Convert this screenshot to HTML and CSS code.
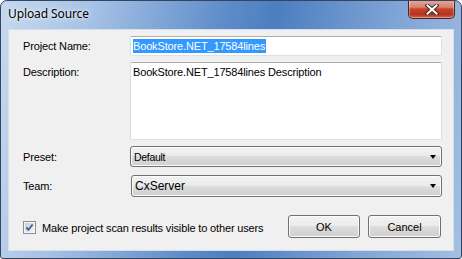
FILE: index.html
```html
<!DOCTYPE html>
<html lang="en">
<head>
  <meta charset="UTF-8">
  <title>Upload Source</title>
  <link rel="stylesheet" href="styles.css">
</head>
<body>
  <div class="window">
    <div class="titlebar">
      <span class="title">Upload Source</span>
      <div class="close-btn">
        <svg width="14" height="11" viewBox="0 0 14 11">
          <path d="M2.5 1.5 L11.5 9.5 M11.5 1.5 L2.5 9.5" stroke="#3a2a2a" stroke-width="4" stroke-linecap="square"/>
          <path d="M2.5 1.5 L11.5 9.5 M11.5 1.5 L2.5 9.5" stroke="#ffffff" stroke-width="2" stroke-linecap="square"/>
        </svg>
      </div>
    </div>

    <div class="client">
      <div class="row row-name">
        <label class="field-label">Project Name:</label>
        <div class="textbox"><span class="selected">BookStore.NET_17584lines</span></div>
      </div>

      <div class="row row-desc">
        <label class="field-label">Description:</label>
        <div class="textbox textarea">BookStore.NET_17584lines Description</div>
      </div>

      <div class="row row-preset">
        <label class="field-label">Preset:</label>
        <div class="combo combo-small">
          <span class="combo-text">Default</span>
          <span class="combo-arrow"></span>
        </div>
      </div>

      <div class="row row-team">
        <label class="field-label">Team:</label>
        <div class="combo combo-large">
          <span class="combo-text">CxServer</span>
          <span class="combo-arrow"></span>
        </div>
      </div>

      <div class="row row-bottom">
        <div class="check">
          <svg width="13" height="13" viewBox="0 0 13 13">
            <defs>
              <linearGradient id="cbg" x1="0" y1="0" x2="1" y2="1">
                <stop offset="0" stop-color="#c9ccd1"/>
                <stop offset="1" stop-color="#f4f4f4"/>
              </linearGradient>
            </defs>
            <rect x="0.5" y="0.5" width="12" height="12" fill="#f6f6f6" stroke="#8e8f8f"/>
            <rect x="2" y="2" width="9" height="9" fill="url(#cbg)"/>
            <path d="M3.3 6.4 L5.4 8.8 L9.6 3.4" fill="none" stroke="#3c5a9e" stroke-width="1.7"/>
          </svg>
          <span>Make project scan results visible to other users</span>
        </div>
        <div class="buttons">
          <button class="btn btn-ok">OK</button>
          <button class="btn btn-cancel">Cancel</button>
        </div>
      </div>
    </div>
  </div>
</body>
</html>
```

FILE: styles.css
```css
body {
  margin: 0;
  background-color: #ffffff;
  font-family: 'Liberation Sans', Arial, sans-serif;
  font-size: 11px;
  letter-spacing: -0.15px;
  color: #000000;
}
.window {
  width: 462px;
  height: 259px;
  box-sizing: border-box;
  border: 1px solid #34465f;
  border-radius: 7px 7px 3px 3px;
  background: linear-gradient(100deg, #c6d8ee 0%, #a7c2e6 18%, #5d8cc8 45%, #4c7ec0 55%, #7ea3d5 78%, #a3bfe3 100%);
  display: flex;
  flex-direction: column;
  overflow: hidden;
}
.titlebar {
  height: 28px;
  display: flex;
  align-items: flex-start;
  padding-left: 7px;
  padding-right: 6px;
}
.title {
  font-family: 'Noto Sans', 'Open Sans', sans-serif;
  font-size: 12px;
  letter-spacing: -0.1px;
  color: #000000;
  margin-top: 4px;
  text-shadow: 0 0 6px rgba(255, 255, 255, 0.9), 0 0 3px rgba(255, 255, 255, 0.7);
}
.close-btn {
  margin-left: auto;
  margin-top: -1px;
  width: 47px;
  height: 19px;
  box-sizing: border-box;
  border: 1px solid #4a2520;
  border-top: none;
  border-radius: 0 0 5px 5px;
  background: linear-gradient(#e9a99c 0%, #d7826f 40%, #c6442c 50%, #b8321c 80%, #d2674f 100%);
  box-shadow: inset 0 0 0 1px rgba(255, 255, 255, 0.35);
  display: flex;
  align-items: center;
  justify-content: center;
}
.client {
  margin: 0 7px 7px 7px;
  flex: 1;
  box-sizing: border-box;
  border: 1px solid #d5dfec;
  background-color: #f0f0f0;
  padding: 6px 11px 0 14px;
  display: flex;
  flex-direction: column;
}
.row {
  display: flex;
  align-items: center;
}
.field-label {
  width: 107px;
  flex-shrink: 0;
}
.textbox {
  flex: 1;
  height: 20px;
  box-sizing: border-box;
  background-color: #ffffff;
  border: 1px solid #dbdfe6;
  border-top-color: #abadb3;
  border-radius: 2px;
  padding: 2px 2px 0 2px;
}
.selected {
  display: inline-block;
  background-color: #3399ff;
  color: #ffffff;
  line-height: 14px;
  padding-right: 1px;
}
.row-desc {
  margin-top: 6px;
  align-items: flex-start;
}
.row-desc .field-label {
  padding-top: 4px;
}
.textarea {
  height: 78px;
  padding-top: 3px;
}
.combo {
  flex: 1;
  box-sizing: border-box;
  border: 1px solid #707070;
  border-radius: 3px;
  background: linear-gradient(#f2f2f2 0%, #ebebeb 50%, #dddddd 50%, #cfcfcf 100%);
  box-shadow: inset 0 0 0 1px #fcfcfc;
  display: flex;
  align-items: center;
  padding: 0 5px 0 3px;
}
.combo-arrow {
  margin-left: auto;
  width: 0;
  height: 0;
  border-left: 3.5px solid transparent;
  border-right: 3.5px solid transparent;
  border-top: 4px solid #000000;
}
.row-preset {
  margin-top: 6px;
}
.combo-small {
  height: 21px;
}
.combo-small .combo-text {
  font-size: 10.5px;
  letter-spacing: -0.3px;
}
.row-team {
  margin-top: 8px;
}
.combo-large {
  height: 22px;
  margin-left: 1px;
}
.combo-large .combo-text {
  font-size: 12px;
  letter-spacing: 0;
}
.row-bottom {
  margin-top: 18px;
  justify-content: space-between;
  padding-right: 1px;
}
.check {
  display: flex;
  align-items: center;
  gap: 6px;
  margin-top: 2px;
}
.check svg {
  display: block;
}
.buttons {
  display: flex;
  gap: 8px;
}
.btn {
  height: 23px;
  box-sizing: border-box;
  border: 1px solid #707070;
  border-radius: 3px;
  background: linear-gradient(#f2f2f2 0%, #ebebeb 50%, #dddddd 50%, #cfcfcf 100%);
  box-shadow: inset 0 0 0 1px #fcfcfc;
  font-family: 'Liberation Sans', Arial, sans-serif;
  font-size: 11px;
  color: #000000;
  padding: 0;
}
.btn-ok {
  width: 72px;
}
.btn-cancel {
  width: 73px;
}
```
